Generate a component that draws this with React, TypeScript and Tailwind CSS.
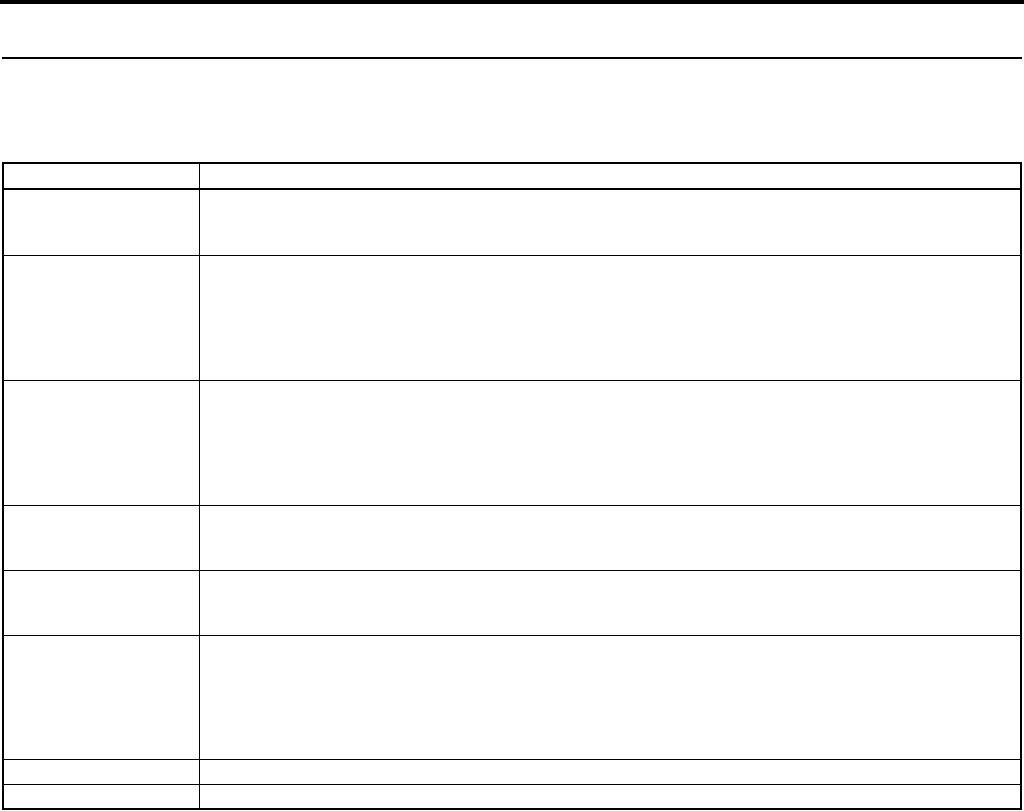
export default function App() {
  const rows = [
    { h: "h-[66px]", last: false },
    { h: "h-[125px]", last: false },
    { h: "h-[125px]", last: false },
    { h: "h-[65px]", last: false },
    { h: "h-[65px]", last: false },
    { h: "h-[124px]", last: false },
    { h: "h-[25px]", last: false },
    { h: "h-[23px]", last: true },
  ];
  return (
    <div className="w-[1024px] h-[811px] bg-white overflow-hidden font-['Liberation_Sans',sans-serif]">
      <div className="h-[4px] bg-black" />
      <div className="mt-[53px] mx-[2px] h-[2px] bg-black" />
      <div className="mt-[103px] ml-[2px] w-[1020px] border-2 border-black flex flex-col">
        <div className="h-[26px] border-b-2 border-black flex">
          <div className="w-[196px] border-r border-black" />
          <div className="flex-1" />
        </div>
        {rows.map((r, i) => (
          <div
            key={i}
            className={`${r.h} flex ${r.last ? "" : "border-b border-black"}`}
          >
            <div className="w-[196px] border-r border-black" />
            <div className="flex-1" />
          </div>
        ))}
      </div>
    </div>
  );
}
